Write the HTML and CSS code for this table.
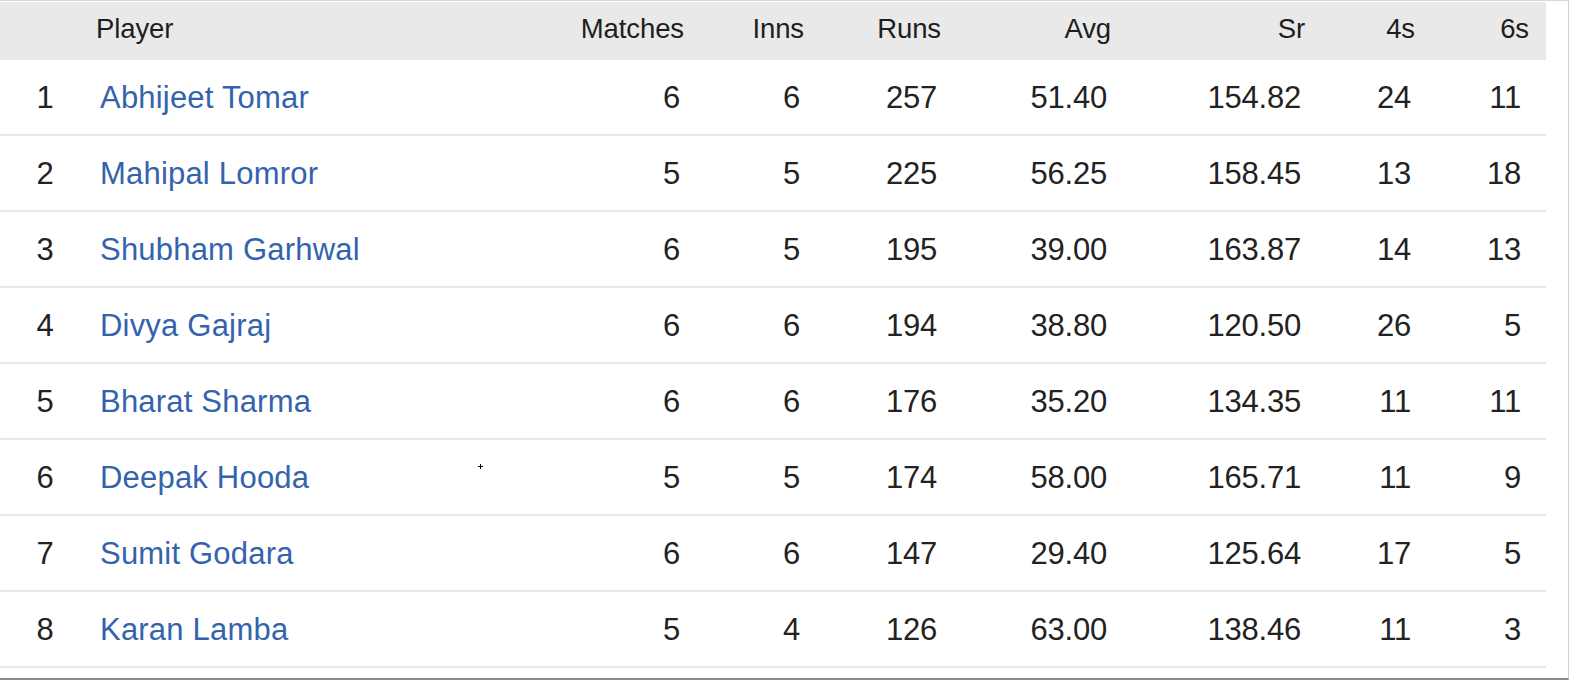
FILE: index.html
```html
<!DOCTYPE html>
<html>
<head>
<meta charset="utf-8">
<link rel="stylesheet" href="styles.css">
</head>
<body>
<div class="frame">
  <div class="stats">
    <div class="row head">
      <div class="c rank"></div>
      <div class="c name">Player</div>
      <div class="c num">Matches</div>
      <div class="c num">Inns</div>
      <div class="c num">Runs</div>
      <div class="c num">Avg</div>
      <div class="c num">Sr</div>
      <div class="c num">4s</div>
      <div class="c num last">6s</div>
    </div>
    <div class="row">
      <div class="c rank">1</div><div class="c name"><a href="#">Abhijeet Tomar</a></div>
      <div class="c num">6</div><div class="c num">6</div><div class="c num">257</div><div class="c num">51.40</div><div class="c num">154.82</div><div class="c num">24</div><div class="c num last">11</div>
    </div>
    <div class="row">
      <div class="c rank">2</div><div class="c name"><a href="#">Mahipal Lomror</a></div>
      <div class="c num">5</div><div class="c num">5</div><div class="c num">225</div><div class="c num">56.25</div><div class="c num">158.45</div><div class="c num">13</div><div class="c num last">18</div>
    </div>
    <div class="row">
      <div class="c rank">3</div><div class="c name"><a href="#">Shubham Garhwal</a></div>
      <div class="c num">6</div><div class="c num">5</div><div class="c num">195</div><div class="c num">39.00</div><div class="c num">163.87</div><div class="c num">14</div><div class="c num last">13</div>
    </div>
    <div class="row">
      <div class="c rank">4</div><div class="c name"><a href="#">Divya Gajraj</a></div>
      <div class="c num">6</div><div class="c num">6</div><div class="c num">194</div><div class="c num">38.80</div><div class="c num">120.50</div><div class="c num">26</div><div class="c num last">5</div>
    </div>
    <div class="row">
      <div class="c rank">5</div><div class="c name"><a href="#">Bharat Sharma</a></div>
      <div class="c num">6</div><div class="c num">6</div><div class="c num">176</div><div class="c num">35.20</div><div class="c num">134.35</div><div class="c num">11</div><div class="c num last">11</div>
    </div>
    <div class="row">
      <div class="c rank">6</div><div class="c name"><a href="#">Deepak Hooda</a><span class="cursor"></span></div>
      <div class="c num">5</div><div class="c num">5</div><div class="c num">174</div><div class="c num">58.00</div><div class="c num">165.71</div><div class="c num">11</div><div class="c num last">9</div>
    </div>
    <div class="row">
      <div class="c rank">7</div><div class="c name"><a href="#">Sumit Godara</a></div>
      <div class="c num">6</div><div class="c num">6</div><div class="c num">147</div><div class="c num">29.40</div><div class="c num">125.64</div><div class="c num">17</div><div class="c num last">5</div>
    </div>
    <div class="row">
      <div class="c rank">8</div><div class="c name"><a href="#">Karan Lamba</a></div>
      <div class="c num">5</div><div class="c num">4</div><div class="c num">126</div><div class="c num">63.00</div><div class="c num">138.46</div><div class="c num">11</div><div class="c num last">3</div>
    </div>
  </div>
</div>
</body>
</html>
```
FILE: styles.css
```css
* { box-sizing: border-box; }
html, body { margin: 0; padding: 0; background: #fff; }
body {
  font-family: "Liberation Sans", Arial, sans-serif;
  color: #222;
  overflow: hidden;
}
.frame {
  width: 1569px;
  height: 680px;
  border-top: 1px solid #d4d8e2;
  border-right: 1px solid #d0d0d0;
  border-bottom: 2px solid #8c8c8c;
  padding-top: 1px;
  position: relative;
}
.stats {
  width: 1546px;
}
.row {
  display: grid;
  grid-template-columns: 90px 430px 180px 120px 137px 170px 194px 110px 115px;
  height: 76px;
  border-bottom: 2px solid #e8e8e8;
  align-items: center;
  font-size: 31px;
  letter-spacing: -0.2px;
  padding-top: 2px;
}
.row.head {
  height: 58px;
  background: #e9e9e9;
  border-bottom: 0;
  font-size: 27.5px;
  letter-spacing: -0.1px;
  padding-top: 0;
  padding-bottom: 5px;
  color: #1e1e1e;
}
.c { white-space: nowrap; }
.rank { text-align: center; }
.name { padding-left: 10px; position: relative; }
.head .name { padding-left: 6px; }
.num { text-align: right; padding-right: 20px; }
.num.last { padding-right: 25px; }
.head .num { padding-right: 16px; }
.head .num.last { padding-right: 17px; }
.name a {
  color: #3463ae;
  text-decoration: none;
  letter-spacing: 0.2px;
}
.cursor {
  position: absolute;
  left: 388px;
  top: 4px;
  width: 5px;
  height: 5px;
}
.cursor::before, .cursor::after {
  content: "";
  position: absolute;
  background: #000;
}
.cursor::before { left: 2px; top: 0; width: 1px; height: 5px; }
.cursor::after { left: 0; top: 2px; width: 5px; height: 1px; }
```
